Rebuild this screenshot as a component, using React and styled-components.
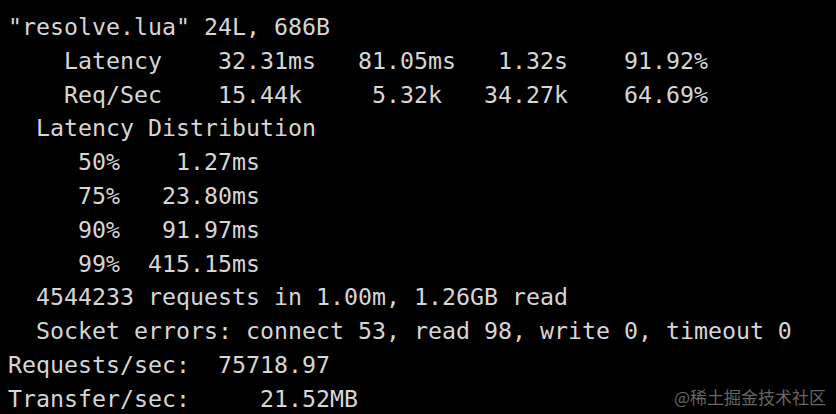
import React from "react";
import styled, { createGlobalStyle } from "styled-components";

const Global = createGlobalStyle`
  html, body { margin: 0; padding: 0; background: #000; }
  body { width: 836px; height: 414px; overflow: hidden; }
`;

const Terminal = styled.div`
  position: relative;
  width: 836px;
  height: 414px;
  box-sizing: border-box;
  background: #000;
  padding: 10px 0 0 8px;
  overflow: hidden;
  display: flex;
  flex-direction: column;
`;

const Line = styled.div`
  font-family: "DejaVu Sans Mono", "Liberation Mono", monospace;
  font-size: 23.25px;
  line-height: 33.8px;
  height: 33.8px;
  color: #d6d6d6;
  white-space: pre;
`;

const Watermark = styled.div`
  position: absolute;
  right: 10px;
  bottom: 6px;
  font-family: "Noto Sans CJK SC", "Noto Sans", sans-serif;
  font-size: 17px;
  line-height: 22px;
  color: #666;
  white-space: nowrap;
`;

const lines = [
  `"resolve.lua" 24L, 686B`,
  `    Latency    32.31ms   81.05ms   1.32s    91.92%`,
  `    Req/Sec    15.44k     5.32k   34.27k    64.69%`,
  `  Latency Distribution`,
  `     50%    1.27ms`,
  `     75%   23.80ms`,
  `     90%   91.97ms`,
  `     99%  415.15ms`,
  `  4544233 requests in 1.00m, 1.26GB read`,
  `  Socket errors: connect 53, read 98, write 0, timeout 0`,
  `Requests/sec:  75718.97`,
  `Transfer/sec:     21.52MB`,
];

export default function App() {
  return (
    <>
      <Global />
      <Terminal>
        {lines.map((l, i) => (
          <Line key={i}>{l}</Line>
        ))}
        <Watermark>@稀土掘金技术社区</Watermark>
      </Terminal>
    </>
  );
}
